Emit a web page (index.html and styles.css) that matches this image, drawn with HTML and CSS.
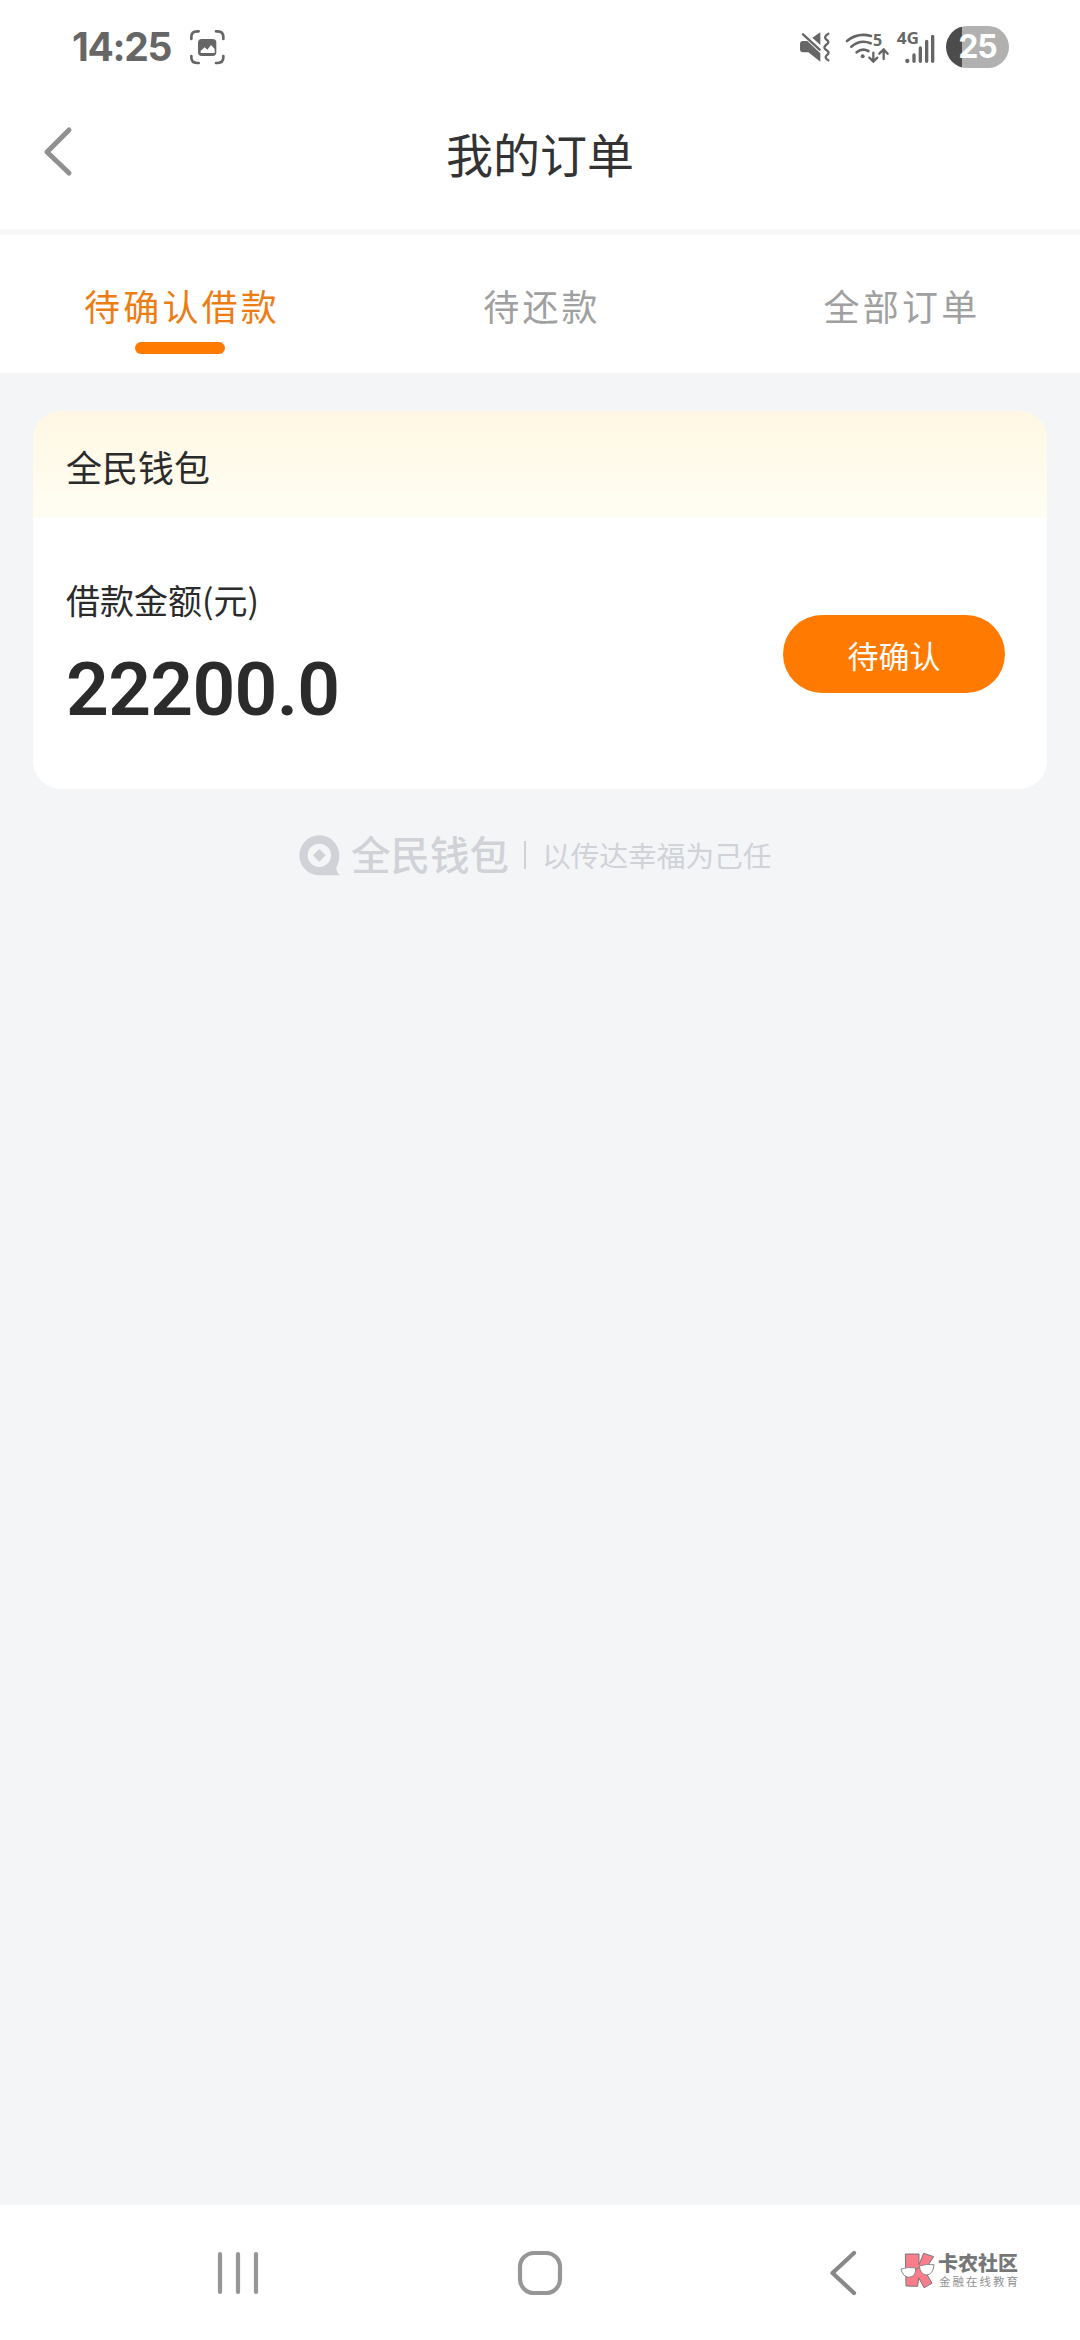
FILE: index.html
```html
<!DOCTYPE html>
<html lang="zh-CN">
<head>
<meta charset="utf-8">
<title>我的订单</title>
<link rel="stylesheet" href="styles.css">
</head>
<body>
<div class="screen">
  <div class="status">
    <span class="clock">14:25</span>
    <svg class="shot" viewBox="447 57 111 111">
      <g fill="none" stroke="#666" stroke-width="8" stroke-linecap="round">
        <path d="M454 87v-6q0-17 17-17h5M528 64h5q17 0 17 17v6M550 138v4q0 17-17 17h-5M476 159h-5q-17 0-17-17v-4"/>
      </g>
      <rect x="474" y="87" width="55" height="51" rx="11" fill="#666"/>
      <path d="M482 129v-7l12-10 8 7 11-14 11 12v12z" fill="#fff"/>
    </svg>
    <div class="indicators">
      <svg class="mute" viewBox="54 63 99 96">
        <path d="M66 93h13l39 37v25L82 127H66q-9 0-9-9v-16q0-9 9-9zM94 83l24-16v38z" fill="#666"/>
        <path d="M66 73l50 46" stroke="#666" stroke-width="7" stroke-linecap="round"/>
        <path d="M142 71q-15 9-7 17 14 8 0 17-10 8 1 15 13 8 1 16-8 7 5 15" fill="none" stroke="#666" stroke-width="7" stroke-linecap="round" stroke-linejoin="round"/>
      </svg>
      <svg class="wifi" viewBox="192 63 132 99">
        <g fill="none" stroke="#666" stroke-width="8" stroke-linecap="round">
          <path d="M198 93q32-26 72-15M211 110q27-23 58-10M227 127q17-14 35-4"/>
          <path d="M277 128v26M265 143l12 12 12-12M308 147v-27M295 131l13-13 12 13" stroke-width="7"/>
        </g>
        <circle cx="245" cy="139" r="6" fill="#666"/>
        <text x="276" y="107" class="wifi-num">5</text>
      </svg>
      <svg class="signal" viewBox="345 57 120 105">
        <text x="347" y="101" class="net" textLength="67" lengthAdjust="spacingAndGlyphs">4G</text>
        <circle cx="379" cy="153" r="6.500" fill="#666"/>
        <path d="M399 135v19M418 114v40M437 94v60M455 79v75" stroke="#666" stroke-width="10" stroke-linecap="round"/>
      </svg>
      <span class="battery">25</span>
    </div>
  </div>
  <header class="header">
    <svg class="back" viewBox="0 0 30 50"><path d="M26 4L4 26l22 21" fill="none" stroke="#909090" stroke-width="5" stroke-linecap="round" stroke-linejoin="round"/></svg>
    <h1 class="title">我的订单</h1>
  </header>
  <nav class="tabs">
    <div class="tab active">待确认借款</div>
    <div class="tab">待还款</div>
    <div class="tab">全部订单</div>
  </nav>
  <main class="content">
    <section class="card">
      <div class="card-head">全民钱包</div>
      <div class="card-body">
        <div>
          <div class="label">借款金额(元)</div>
          <div class="amount">22200.0</div>
        </div>
        <button class="confirm">待确认</button>
      </div>
    </section>
    <footer class="brand">
      <svg class="brand-logo" viewBox="57 75 123 123"><path fill-rule="evenodd" d="M118 76a60 60 0 0 1 60 60q0 22-9 36 0 15 11 24h-62a60 60 0 0 1 0-120zM118 101a35 35 0 1 0 0 70 35 35 0 0 0 0-70zM118 117l19 19-19 19-19-19z" fill="#d0d2d8"/></svg>
      <span class="brand-name">全民钱包</span>
      <span class="brand-line"></span>
      <span class="brand-slogan">以传达幸福为己任</span>
    </footer>
  </main>
  <div class="navbar">
    <svg class="nav-icon" viewBox="0 0 46 46"><path d="M5 4v38M23 4v38M41 4v38" stroke="#969696" stroke-width="4.200" stroke-linecap="round"/></svg>
    <svg class="nav-icon" viewBox="0 0 46 46"><rect x="3" y="3" width="40" height="40" rx="14" fill="none" stroke="#969696" stroke-width="4.200"/></svg>
    <svg class="nav-icon" viewBox="0 0 46 46"><path d="M34 3L12.500 23 34 43" fill="none" stroke="#888" stroke-width="4.200" stroke-linecap="round" stroke-linejoin="round"/></svg>
    <div class="community">
      <svg class="community-logo" viewBox="299 186 105 108">
        <path d="M315 192h41v32l14-34 30 10-27 41 22 39-24 13-16-30-3 26-35-1z" fill="#fa7d8b" stroke="#777" stroke-width="3" stroke-linejoin="round"/>
        <path d="M302 237q22-8 44-3 2 27-21 28-18-2-23-25zM357 228q22-7 44-4-2 30-23 31-18-2-21-27zM346 238l11-5" fill="#fff" stroke="#777" stroke-width="2.500" stroke-linejoin="round"/>
      </svg>
      <div class="community-text">
        <span class="community-name">卡农社区</span>
        <span class="community-sub">金融在线教育</span>
      </div>
    </div>
  </div>
</div>
</body>
</html>
```

FILE: styles.css
```css
* { box-sizing: border-box; }
body { margin: 0; font-family: "Noto Sans CJK SC", sans-serif; color: #2b2b2b; }
svg { display: block; flex: none; overflow: visible; }
.screen { width: 1080px; height: 2340px; display: flex; flex-direction: column; background: #fff; overflow: hidden; }

.status { height: 76px; padding: 18px 71px 0 72px; display: flex; align-items: center; color: #666; flex: none; }
.clock { font: 700 39px/58px Inter, sans-serif; letter-spacing: -1.300px; width: 117px; white-space: nowrap; }
.shot { width: 37px; height: 37px; }
.indicators { margin-left: auto; display: flex; align-items: center; }
.mute { width: 33px; height: 32px; }
.wifi { width: 44px; height: 33px; margin-left: 13px; }
.signal { width: 40px; height: 35px; margin: 0 0 2px 7px; }
.wifi-num { font: 700 48px/1 "Open Sans", sans-serif; fill: #666; }
.net { font: 700 48px/1 "Open Sans", sans-serif; fill: #666; }
.battery { width: 63px; height: 42px; margin-left: 10px; border-radius: 21px; background: linear-gradient(90deg, #4c4c4c 16px, #b1b1b1 16px); color: #fff; font: 700 32px/42px Inter, sans-serif; letter-spacing: -1px; text-align: center; }

.header { height: 159px; border-bottom: 6px solid #f8f8f9; display: grid; grid-template-columns: 80px 1fr 80px; align-items: center; flex: none; }
.back { width: 30px; height: 50px; margin: 0 0 3px 43px; }
.title { margin: 0; font-size: 47px; line-height: 70px; font-weight: 400; text-align: center; color: #333; }

.tabs { height: 138px; display: grid; grid-template-columns: repeat(3, 1fr); flex: none; }
.tab { padding-top: 43px; text-align: center; text-indent: 4px; font-size: 36px; line-height: 54px; letter-spacing: 3.200px; color: #a0a0a0; }
.active { color: #ec7d14; }
.active::after { content: ""; display: block; width: 90px; height: 12px; border-radius: 6px; margin: 10px auto 0; background: #ff7a00; }

.content { flex: 1; background: #f4f5f7; padding: 38px 33px 0; }
.card { height: 378px; border-radius: 28px; background: #fff; overflow: hidden; }
.card-head { height: 106px; padding: 28px 33px 0; font-size: 36px; line-height: 54px; background: linear-gradient(#fff7e3, #fffdf3); }
.card-body { height: 272px; padding: 2px 42px 0 33px; display: flex; justify-content: space-between; align-items: center; }
.label { font-size: 34px; line-height: 50px; }
.amount { margin-top: 20px; font: 600 75px/88px Roboto, sans-serif; letter-spacing: -0.700px; }
.confirm { width: 222px; height: 78px; padding: 2px 0 0; border: 0; border-radius: 39px; background: #ff7a00; color: #fff; font: 400 31px/76px "Noto Sans CJK SC", sans-serif; }

.brand { margin-top: 45px; padding-left: 266px; display: flex; align-items: center; height: 42px; color: #d0d2d8; white-space: nowrap; }
.brand-logo { width: 41px; height: 41px; }
.brand-name { margin-left: 11px; width: 160px; padding-bottom: 4px; font-size: 39.500px; line-height: 42px; font-weight: 500; }
.brand-line { width: 2px; height: 28px; margin: 0 16px 0 13px; background: #d0d2d8; }
.brand-slogan { font-size: 28.700px; line-height: 42px; }

.navbar { height: 135px; padding: 45px 0 0 215px; display: flex; flex: none; }
.nav-icon { width: 46px; height: 46px; margin-right: 256px; }
.nav-icon:nth-child(3) { margin-right: 0; margin-left: 1px; }
.community { display: flex; padding-top: 2px; margin-left: 34px; }
.community-logo { width: 35px; height: 36px; }
.community-text { display: flex; flex-direction: column; margin: 0 0 0 3px; white-space: nowrap; color: #777; }
.community-name { font-size: 20px; line-height: 21px; font-weight: 900; }
.community-sub { margin-top: 1px; padding-left: 1px; font-size: 11.500px; line-height: 14px; letter-spacing: 2px; color: #929292; }
```
